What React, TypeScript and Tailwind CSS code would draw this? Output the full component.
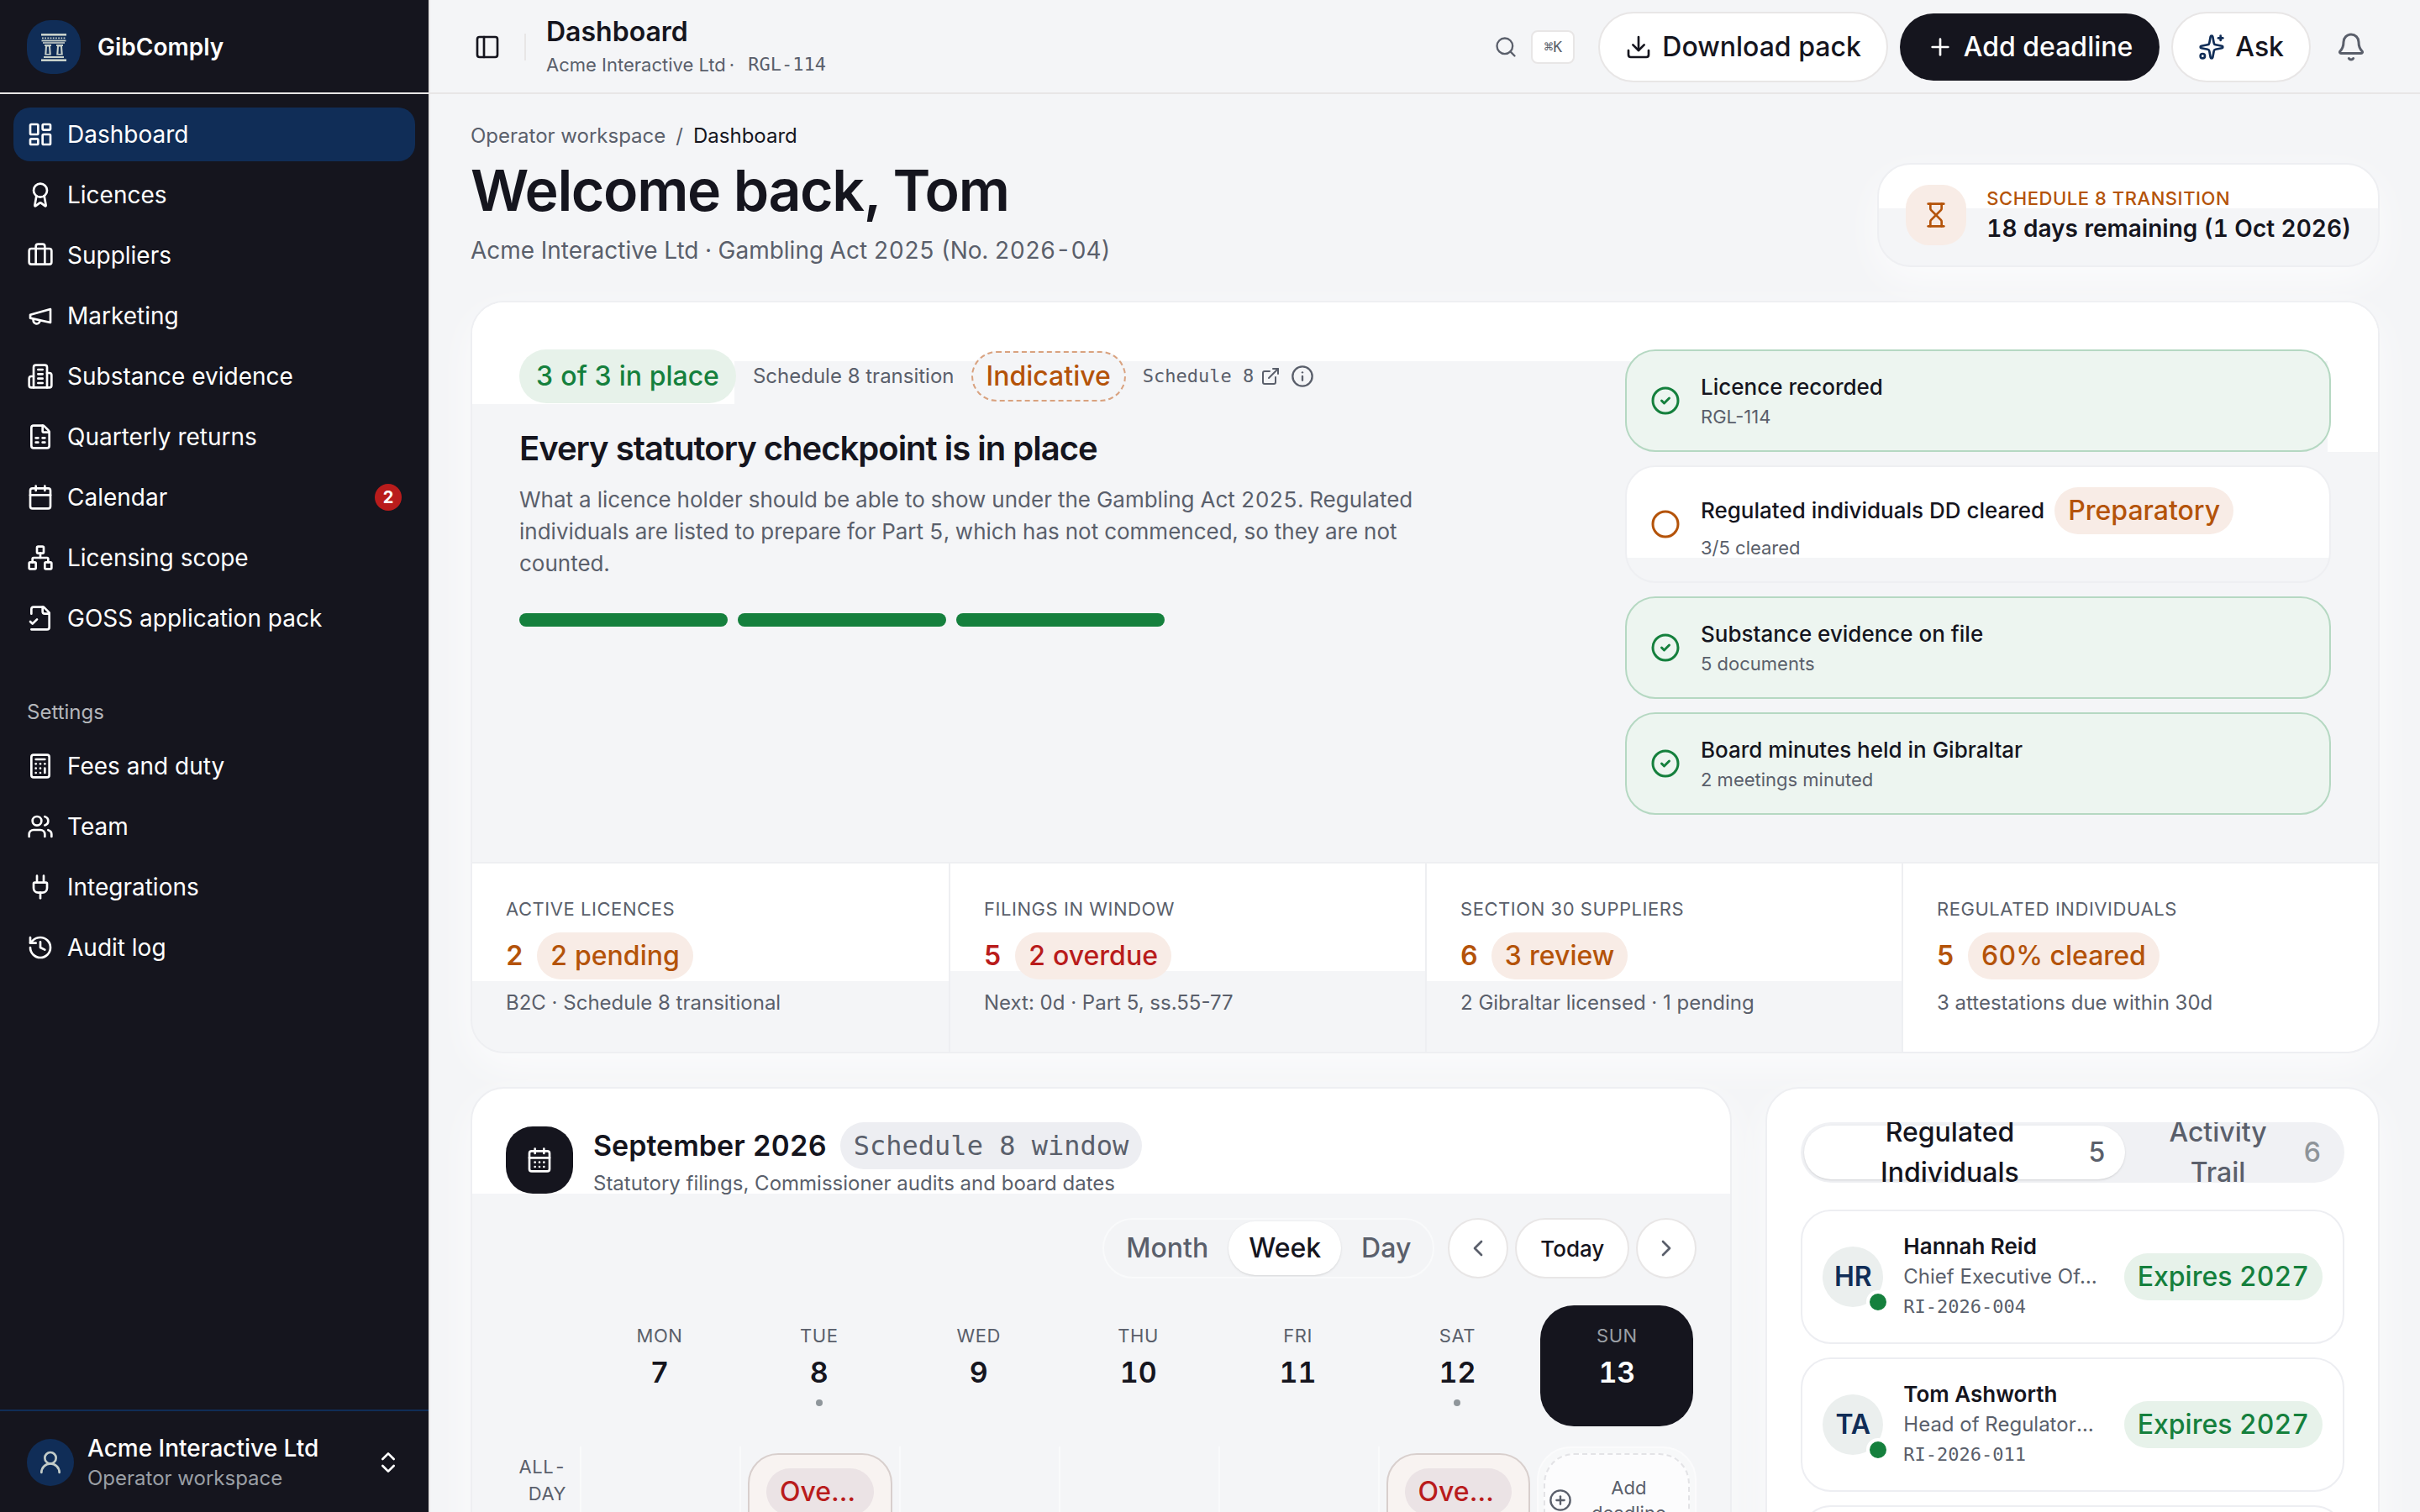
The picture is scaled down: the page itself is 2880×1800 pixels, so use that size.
import type { ReactNode } from "react";
import clsx from "clsx";
import {
  Award,
  Bell,
  Calculator,
  Calendar,
  CalendarDays,
  ChevronLeft,
  ChevronRight,
  ChevronsUpDown,
  Circle,
  CircleCheck,
  CirclePlus,
  Download,
  ExternalLink,
  FileSpreadsheet,
  History,
  Hourglass,
  Info,
  LayoutDashboard,
  Network,
  PanelLeft,
  Plug,
  Plus,
  Search,
  Sparkles,
  UserRound,
  Users,
  type LucideIcon,
} from "lucide-react";

type IconProps = { className?: string };

type NavItem = {
  label: string;
  icon: LucideIcon | ((props: IconProps) => ReactNode);
  active?: boolean;
  badge?: number;
};

type Tone = "green" | "amber" | "red" | "neutral";

function StrokeIcon({ className, children }: IconProps & { children: ReactNode }) {
  return (
    <svg
      viewBox="0 0 24 24"
      fill="none"
      stroke="currentColor"
      strokeWidth="2"
      strokeLinecap="round"
      strokeLinejoin="round"
      className={className}
    >
      {children}
    </svg>
  );
}

function BuildingIcon({ className }: IconProps) {
  return (
    <StrokeIcon className={className}>
      <path d="M6 22V4a2 2 0 0 1 2-2h8a2 2 0 0 1 2 2v18Z" />
      <path d="M6 12H4a2 2 0 0 0-2 2v6a2 2 0 0 0 2 2h2" />
      <path d="M18 9h2a2 2 0 0 1 2 2v9a2 2 0 0 1-2 2h-2" />
      <path d="M10 6h4M10 10h4M10 14h4M10 18h4" />
    </StrokeIcon>
  );
}

function SuitcaseIcon({ className }: IconProps) {
  return (
    <StrokeIcon className={className}>
      <path d="M16 20V4a2 2 0 0 0-2-2h-4a2 2 0 0 0-2 2v16" />
      <rect width="20" height="14" x="2" y="6" rx="2" />
    </StrokeIcon>
  );
}

function MegaphoneIcon({ className }: IconProps) {
  return (
    <StrokeIcon className={className}>
      <path d="m3 11 18-5v12L3 14v-3z" />
      <path d="M11.6 16.8a3 3 0 1 1-5.8-1.6" />
    </StrokeIcon>
  );
}

function FileCheckIcon({ className }: IconProps) {
  return (
    <StrokeIcon className={className}>
      <path d="M4 22h14a2 2 0 0 0 2-2V7l-5-5H6a2 2 0 0 0-2 2v4" />
      <path d="M14 2v4a2 2 0 0 0 2 2h4" />
      <path d="m3 15 2 2 4-4" />
    </StrokeIcon>
  );
}

function TempleLogo() {
  return (
    <svg viewBox="0 0 30 33" className="h-[33px] w-[30px]" fill="#c9d2cb">
      <rect x="0" y="0" width="30" height="2.6" />
      <path d="M1 5.4h28" stroke="#c9d2cb" strokeWidth="1.8" strokeDasharray="1.8 1.4" />
      <rect x="0.5" y="7.6" width="29" height="1.8" />
      <rect x="2" y="10.2" width="26" height="1.6" />
      <path d="M4 13h8v2h-1l.8 10.5H4.2L5 15H4zM18 13h8v2h-1l.8 10.5h-7.6L19 15h-1z" />
      <path d="M7 15.5h2l.6 8.5H6.4zM21 15.5h2l.6 8.5h-3.2z" fill="#102d57" />
      <rect x="3" y="27" width="24" height="2" />
      <rect x="0" y="30.4" width="30" height="2.6" />
    </svg>
  );
}

const mainNav: NavItem[] = [
  { label: "Dashboard", icon: LayoutDashboard, active: true },
  { label: "Licences", icon: Award },
  { label: "Suppliers", icon: SuitcaseIcon },
  { label: "Marketing", icon: MegaphoneIcon },
  { label: "Substance evidence", icon: BuildingIcon },
  { label: "Quarterly returns", icon: FileSpreadsheet },
  { label: "Calendar", icon: Calendar, badge: 2 },
  { label: "Licensing scope", icon: Network },
  { label: "GOSS application pack", icon: FileCheckIcon },
];

const settingsNav: NavItem[] = [
  { label: "Fees and duty", icon: Calculator },
  { label: "Team", icon: Users },
  { label: "Integrations", icon: Plug },
  { label: "Audit log", icon: History },
];

const checkpoints = [
  { title: "Licence recorded", detail: "RGL-114", done: true },
  {
    title: "Regulated individuals DD cleared",
    detail: "3/5 cleared",
    done: false,
    tag: "Preparatory",
  },
  { title: "Substance evidence on file", detail: "5 documents", done: true },
  { title: "Board minutes held in Gibraltar", detail: "2 meetings minuted", done: true },
];

const stats = [
  {
    label: "Active licences",
    value: "2",
    tag: "2 pending",
    detail: "B2C · Schedule 8 transitional",
    valueClass: "text-[#b45309]",
    tone: "amber" as Tone,
    surface: "bg-[linear-gradient(#fff_140px,#f4f5f7_140px)]",
  },
  {
    label: "Filings in window",
    value: "5",
    tag: "2 overdue",
    detail: "Next: 0d · Part 5, ss.55-77",
    valueClass: "text-[#b91c1c]",
    tone: "red" as Tone,
    surface: "bg-[linear-gradient(#fff_128px,#f4f5f7_128px)]",
  },
  {
    label: "Section 30 suppliers",
    value: "6",
    tag: "3 review",
    detail: "2 Gibraltar licensed · 1 pending",
    valueClass: "text-[#b45309]",
    tone: "amber" as Tone,
    surface: "bg-[linear-gradient(#fff_140px,#f4f5f7_140px)]",
  },
  {
    label: "Regulated individuals",
    value: "5",
    tag: "60% cleared",
    detail: "3 attestations due within 30d",
    valueClass: "text-[#b45309]",
    tone: "amber" as Tone,
    surface: "bg-white",
  },
];

const days = [
  { name: "Mon", date: 7 },
  { name: "Tue", date: 8, event: true },
  { name: "Wed", date: 9 },
  { name: "Thu", date: 10 },
  { name: "Fri", date: 11 },
  { name: "Sat", date: 12, event: true },
  { name: "Sun", date: 13, today: true },
];

const people = [
  { initials: "HR", name: "Hannah Reid", role: "Chief Executive Officer", id: "RI-2026-004" },
  { initials: "TA", name: "Tom Ashworth", role: "Head of Regulatory Affairs", id: "RI-2026-011" },
];

const toneClass: Record<Tone, string> = {
  green: "bg-[#e7f2ea] text-[#15803d]",
  amber: "bg-[#f8ece6] text-[#b45309]",
  red: "bg-[#f8ece6] text-[#b91c1c]",
  neutral: "bg-[#edeef2] text-[#5a5f6b]",
};

const cardClass =
  "rounded-[40px] border-2 border-[#eeeff2] shadow-[0_16px_48px_rgba(255,255,255,0.7)]";

const monoClass = "font-['DejaVu_Sans_Mono','Liberation_Mono',monospace]";

function Pill({
  tone,
  className,
  children,
}: {
  tone: Tone;
  className?: string;
  children: ReactNode;
}) {
  return (
    <span
      className={clsx(
        "inline-flex h-14 shrink-0 items-center rounded-full px-4 text-[32px] leading-none font-medium whitespace-nowrap tabular-nums",
        toneClass[tone],
        className,
      )}
    >
      {children}
    </span>
  );
}

function NavLink({ item }: { item: NavItem }) {
  const Icon = item.icon;
  return (
    <a
      href="#"
      className={clsx(
        "flex h-16 items-center gap-4 rounded-[20px] px-4 text-[28px] text-white",
        item.active && "bg-[#102d57]",
      )}
    >
      <Icon className="size-8 shrink-0" />
      <span className="flex-1">{item.label}</span>
      {item.badge && (
        <span className="flex size-8 items-center justify-center rounded-full bg-[#b91c1c] text-xl font-bold">
          {item.badge}
        </span>
      )}
    </a>
  );
}

function Sidebar() {
  return (
    <aside className="flex w-[512px] shrink-0 flex-col border-r-2 border-[#e8e6e6] bg-[#15151e] text-white">
      <div className="flex h-28 items-center gap-5 border-b-2 border-[#e8e6e6] px-8 pt-0.5">
        <div className="flex size-16 items-center justify-center rounded-[28px] bg-[#102d57]">
          <TempleLogo />
        </div>
        <span className="text-[28px] font-semibold">GibComply</span>
      </div>

      <nav className="flex flex-1 flex-col gap-4 text-white">
        <div className="flex flex-col gap-2 p-4">
          {mainNav.map((item) => (
            <NavLink key={item.label} item={item} />
          ))}
        </div>
        <div className="flex flex-col p-4">
          <div className="flex h-16 items-center px-4 text-2xl text-[#b4b6ba]">Settings</div>
          <div className="flex flex-col gap-2">
            {settingsNav.map((item) => (
              <NavLink key={item.label} item={item} />
            ))}
          </div>
        </div>
      </nav>

      <button className="flex items-center gap-4 border-t-2 border-[#102d57] px-8 pt-6 pb-[22px] text-left">
        <span className="flex size-14 items-center justify-center rounded-full bg-[#102d57]">
          <UserRound className="size-8 text-[#c3ccc8]" />
        </span>
        <span className="flex flex-1 flex-col pt-0.5">
          <span className="text-[28px] leading-9 font-medium">Acme Interactive Ltd</span>
          <span className="text-2xl leading-9 text-[#9a9fa5]">Operator workspace</span>
        </span>
        <ChevronsUpDown className="size-8" />
      </button>
    </aside>
  );
}

function TopBar() {
  return (
    <header className="flex h-28 shrink-0 items-center justify-between border-b-2 border-[#e8e6e6] pt-0.5 pr-[50px] pl-12">
      <div className="flex items-center gap-6">
        <button aria-label="Toggle sidebar" className="flex w-10 justify-center">
          <PanelLeft className="size-8" />
        </button>
        <div className="h-8 w-0.5 bg-[#e8e6e6]" />
        <div className="pt-0.5">
          <div className="text-[32px] leading-10 font-semibold">Dashboard</div>
          <div className="flex text-[22px] leading-[38px] text-[#5a5f6b]">
            Acme Interactive Ltd<span className="ml-1">·</span>
            <span className={clsx("ml-4", monoClass)}>RGL-114</span>
          </div>
        </div>
      </div>

      <div className="flex items-center gap-3.5">
        <button aria-label="Search" className="mr-3.5 flex items-center gap-4 text-[#5a5f6b]">
          <Search className="size-7" />
          <kbd
            className={clsx(
              "flex h-10 w-[52px] items-center justify-center rounded-lg border-2 border-[#e8e6e6] bg-white text-lg",
              monoClass,
            )}
          >
            ⌘K
          </kbd>
        </button>
        <button className="flex h-[84px] items-center gap-3 rounded-full border-2 border-[#e8e6e6] bg-white px-[30px] text-[32px] font-medium">
          <Download className="size-8" />
          Download pack
        </button>
        <button className="flex h-20 items-center gap-3 rounded-full bg-[#15151e] px-8 text-[32px] font-medium text-white">
          <Plus className="size-8" />
          Add deadline
        </button>
        <button className="mr-0.5 flex h-[84px] items-center gap-3 rounded-full border-2 border-[#e8e6e6] bg-white px-[30px] text-[32px] font-medium">
          <Sparkles className="size-8 text-[#102d57]" />
          Ask
        </button>
        <button aria-label="Notifications" className="flex size-16 items-center justify-center">
          <Bell className="size-9 text-[#5a5f6b]" />
        </button>
      </div>
    </header>
  );
}

function PageHeading() {
  return (
    <div className="flex items-end justify-between">
      <div>
        <div className="flex gap-3 text-2xl leading-8 text-[#5a5f6b]">
          <a href="#">Operator workspace</a>
          <span>/</span>
          <span className="text-[#15151e]">Dashboard</span>
        </div>
        <h1 className="mt-1 text-[68px] leading-[88px] font-semibold tracking-[-0.02em]">
          Welcome back, Tom
        </h1>
        <p className="mt-2 text-[28px] leading-10 text-[#5a5f6b] tabular-nums">
          Acme Interactive Ltd · Gambling Act 2025 (No. 2026-04)
        </p>
      </div>

      <div
        className={clsx(
          cardClass,
          "flex items-center gap-6 bg-[linear-gradient(#fff_52px,#f4f5f7_52px)] px-8 py-6",
        )}
      >
        <div className="flex size-18 items-center justify-center rounded-[28px] bg-[#f8ece6]">
          <Hourglass className="size-8 text-[#b45309]" />
        </div>
        <div>
          <div className="text-[22px] leading-8 font-medium tracking-wide text-[#b45309] uppercase">
            Schedule 8 transition
          </div>
          <div className="text-[28px] leading-10 font-semibold tabular-nums">
            18 days remaining (1 Oct 2026)
          </div>
        </div>
      </div>
    </div>
  );
}

function Checkpoints() {
  return (
    <ul className="flex flex-col gap-4">
      {checkpoints.map((c) => (
        <li
          key={c.title}
          className={clsx(
            "flex items-center gap-6 rounded-[36px] border-2 px-7 py-6",
            c.done
              ? "border-[#b5d8c2] bg-[#edf5f0]"
              : "border-[#eeeff2] bg-[linear-gradient(#fff_108px,#f4f5f7_108px)]",
          )}
        >
          {c.done ? (
            <CircleCheck className="size-9 shrink-0 text-[#15803d]" />
          ) : (
            <Circle className="size-9 shrink-0 text-[#b45309]" />
          )}
          <div>
            <div className="flex items-center gap-3 text-[26px] leading-[38px] font-medium">
              {c.title}
              {c.tag && <Pill tone="amber">{c.tag}</Pill>}
            </div>
            <div className="text-[22px] leading-8 text-[#5a5f6b]">{c.detail}</div>
          </div>
        </li>
      ))}
    </ul>
  );
}

function StatusCard() {
  return (
    <section className={clsx(cardClass, "mt-10 overflow-hidden")}>
      <div className="grid grid-cols-[3fr_2fr] gap-14 bg-[#f4f5f7] bg-[linear-gradient(#fff,#fff),linear-gradient(#fff,#fff),linear-gradient(#fff,#fff)] bg-[length:312px_121px,60px_178px,100%_70px] bg-[position:left_top,right_top,left_top] bg-no-repeat p-14">
        <div>
          <div className="flex items-center gap-5 text-2xl text-[#5a5f6b]">
            <Pill tone="green" className="h-16 px-5">
              3 of 3 in place
            </Pill>
            <span>Schedule 8 transition</span>
            <span className="inline-flex h-[60px] items-center rounded-full border-2 border-dashed border-[#d9a27f] bg-[#f4f5f7] px-4 text-[32px] font-medium text-[#b45309]">
              Indicative
            </span>
            <span className="flex items-center gap-3">
              <a href="#" className={clsx("flex items-center gap-2 text-[22px]", monoClass)}>
                Schedule 8
                <ExternalLink className="size-6" />
              </a>
              <Info className="size-7" />
            </span>
          </div>
          <h2 className="mt-7 text-[40px] leading-[52px] font-semibold tracking-tight">
            Every statutory checkpoint is in place
          </h2>
          <p className="mt-4 max-w-[1100px] text-[26px] leading-[38px] text-[#5a5f6b] tabular-nums">
            What a licence holder should be able to show under the Gambling Act 2025. Regulated
            individuals are listed to prepare for Part 5, which has not commenced, so they are not
            counted.
          </p>
          <div className="mt-10 grid max-w-[768px] grid-cols-3 gap-3">
            <div className="h-4 rounded-full bg-[#15803d]" />
            <div className="h-4 rounded-full bg-[#15803d]" />
            <div className="h-4 rounded-full bg-[#15803d]" />
          </div>
        </div>
        <Checkpoints />
      </div>

      <dl className="grid grid-cols-4 border-t-2 border-[#eeeff2]">
        {stats.map((s) => (
          <div
            key={s.label}
            className={clsx(
              "border-l-2 border-[#eeeff2] px-10 pt-10 pb-[42px] first:border-l-0",
              s.surface,
            )}
          >
            <dt className="text-[22px] leading-7 tracking-wide text-[#5a5f6b] uppercase">
              {s.label}
            </dt>
            <dd className="mt-3.5 flex items-center gap-4 text-[32px] font-semibold tabular-nums">
              <span className={s.valueClass}>{s.value}</span>
              <Pill tone={s.tone}>{s.tag}</Pill>
            </dd>
            <dd className="mt-3 text-2xl leading-8 text-[#5a5f6b]">{s.detail}</dd>
          </div>
        ))}
      </dl>
    </section>
  );
}

function CalendarCard() {
  return (
    <section
      className={clsx(
        cardClass,
        "col-span-8 bg-[linear-gradient(#fff_125px,#f4f5f7_125px)] p-10",
      )}
    >
      <div className="flex items-center gap-6">
        <div className="flex size-20 items-center justify-center rounded-[32px] bg-[#15151e]">
          <CalendarDays className="size-8 text-white" />
        </div>
        <div>
          <div className="flex items-center gap-4">
            <h3 className="text-[34px] leading-none font-semibold tabular-nums">September 2026</h3>
            <Pill tone="neutral" className={monoClass}>
              Schedule 8 window
            </Pill>
          </div>
          <p className="text-2xl leading-[34px] text-[#5a5f6b]">
            Statutory filings, Commissioner audits and board dates
          </p>
        </div>
      </div>

      <div className="mt-6 flex items-center justify-end gap-2">
        <div className="mr-2 flex h-18 items-center rounded-full border-2 border-[#f9fafb] bg-[#f3f4f6] p-0.5 text-[32px] font-medium text-[#5a5f6b]">
          <button className="h-16 px-6">Month</button>
          <button className="h-16 rounded-full bg-white px-6 text-[#15151e] shadow-sm">Week</button>
          <button className="h-16 px-6">Day</button>
        </div>
        <button
          aria-label="Previous week"
          className="flex size-18 items-center justify-center rounded-full border-2 border-[#e8e6e6] bg-white"
        >
          <ChevronLeft className="size-8 text-[#5a5f6b]" />
        </button>
        <button className="h-18 rounded-full border-2 border-[#e8e6e6] bg-white px-7 text-[26px] font-medium">
          Today
        </button>
        <button
          aria-label="Next week"
          className="flex size-18 items-center justify-center rounded-full border-2 border-[#e8e6e6] bg-white"
        >
          <ChevronRight className="size-8 text-[#5a5f6b]" />
        </button>
      </div>

      <div className="mt-8 grid grid-cols-[88px_repeat(7,minmax(0,1fr))]">
        <div />
        {days.map((d) => (
          <div
            key={d.name}
            className={clsx(
              "mx-1 flex h-36 flex-col items-center rounded-[40px] pt-5",
              d.today && "bg-[#15151e] text-white",
            )}
          >
            <span
              className={clsx(
                "text-[22px] leading-8 tracking-wide uppercase",
                d.today ? "text-[#9a9fa5]" : "text-[#5a5f6b]",
              )}
            >
              {d.name}
            </span>
            <span className="mt-1.5 text-[34px] leading-11 font-semibold tabular-nums">
              {d.date}
            </span>
            {d.event && <span className="mt-2.5 size-2 rounded-full bg-[#8f969b]" />}
          </div>
        ))}
      </div>

      <div className="mt-6 grid grid-cols-[88px_repeat(7,minmax(0,1fr))]">
        <div className="py-2 pr-4 text-right text-[22px] leading-8 tracking-wide text-[#5a5f6b] uppercase tabular-nums">
          All-
          <br />
          day
        </div>
        {days.map((d) => (
          <div
            key={d.name}
            className={clsx(
              "min-h-48",
              d.today
                ? "rounded-[40px] border-2 border-[#fbfbfc] bg-[#f7f8f9] p-1.5"
                : "border-l-2 border-[#f9fafb] p-2",
            )}
          >
            {d.event && (
              <button className="flex h-44 w-full flex-col rounded-[36px] border-2 border-[#d8cfcd] bg-[#f8f3f1] px-5 py-4">
                <span className="block w-full truncate rounded-full bg-[#ebe3e5] px-4 text-[32px] leading-14 font-medium text-[#b91c1c]">
                  Overdue
                </span>
              </button>
            )}
            {d.today && (
              <button className="flex w-full items-center rounded-[36px] border-2 border-dashed border-[#e3e3e6] bg-[#fcfcfd] px-1 py-6 text-[22px] leading-[30px] text-[#5a5f6b]">
                <CirclePlus className="size-7 shrink-0" />
                <span className="flex-1">
                  Add
                  <br />
                  deadline
                </span>
              </button>
            )}
          </div>
        ))}
      </div>
    </section>
  );
}

function PeopleCard() {
  return (
    <section className={clsx(cardClass, "col-span-4 bg-white p-10")}>
      <div className="flex h-18 items-center overflow-hidden rounded-full bg-[#f0f1f4] p-1 text-[32px] leading-[48px] font-medium text-[#5a5f6b]">
        <button className="flex h-16 items-center gap-4 rounded-full bg-white px-6 shadow-sm">
          <span className="flex-1 text-[#15151e]">Regulated Individuals</span>
          <span>5</span>
        </button>
        <button className="flex h-16 items-center gap-4 rounded-full px-6">
          <span className="flex-1">Activity Trail</span>
          <span className="text-[#8e9499]">6</span>
        </button>
      </div>

      <ul className="mt-8 flex flex-col gap-4">
        {people.map((p) => (
          <li
            key={p.id}
            className="flex items-center gap-6 rounded-[36px] border-2 border-[#edeef2] p-6"
          >
            <div className="relative flex size-18 shrink-0 items-center justify-center rounded-full bg-[#ebefee] text-[32px] font-semibold text-[#102d57]">
              {p.initials}
              <span className="absolute -right-2 -bottom-2 size-7 rounded-full border-4 border-white bg-[#15803d]" />
            </div>
            <div className="min-w-0 flex-1 leading-9">
              <div className="truncate text-[26px] font-semibold">{p.name}</div>
              <div className="truncate text-2xl leading-9 text-[#5a5f6b]">{p.role}</div>
              <div className={clsx("text-[22px] text-[#5a5f6b]", monoClass)}>{p.id}</div>
            </div>
            <Pill tone="green">Expires 2027</Pill>
          </li>
        ))}
        <li className="h-40 rounded-[36px] border-2 border-[#edeef2]" />
      </ul>
    </section>
  );
}

export default function App() {
  return (
    <div className="flex h-screen overflow-hidden bg-[#f4f5f7] font-['Inter',sans-serif] text-[#15151e] antialiased">
      <Sidebar />
      <div className="flex min-w-0 flex-1 flex-col">
        <TopBar />
        <main className="min-h-0 flex-1 overflow-hidden px-12 pt-[34px]">
          <PageHeading />
          <StatusCard />
          <div className="mt-10 grid grid-cols-12 gap-10">
            <CalendarCard />
            <PeopleCard />
          </div>
        </main>
      </div>
    </div>
  );
}
